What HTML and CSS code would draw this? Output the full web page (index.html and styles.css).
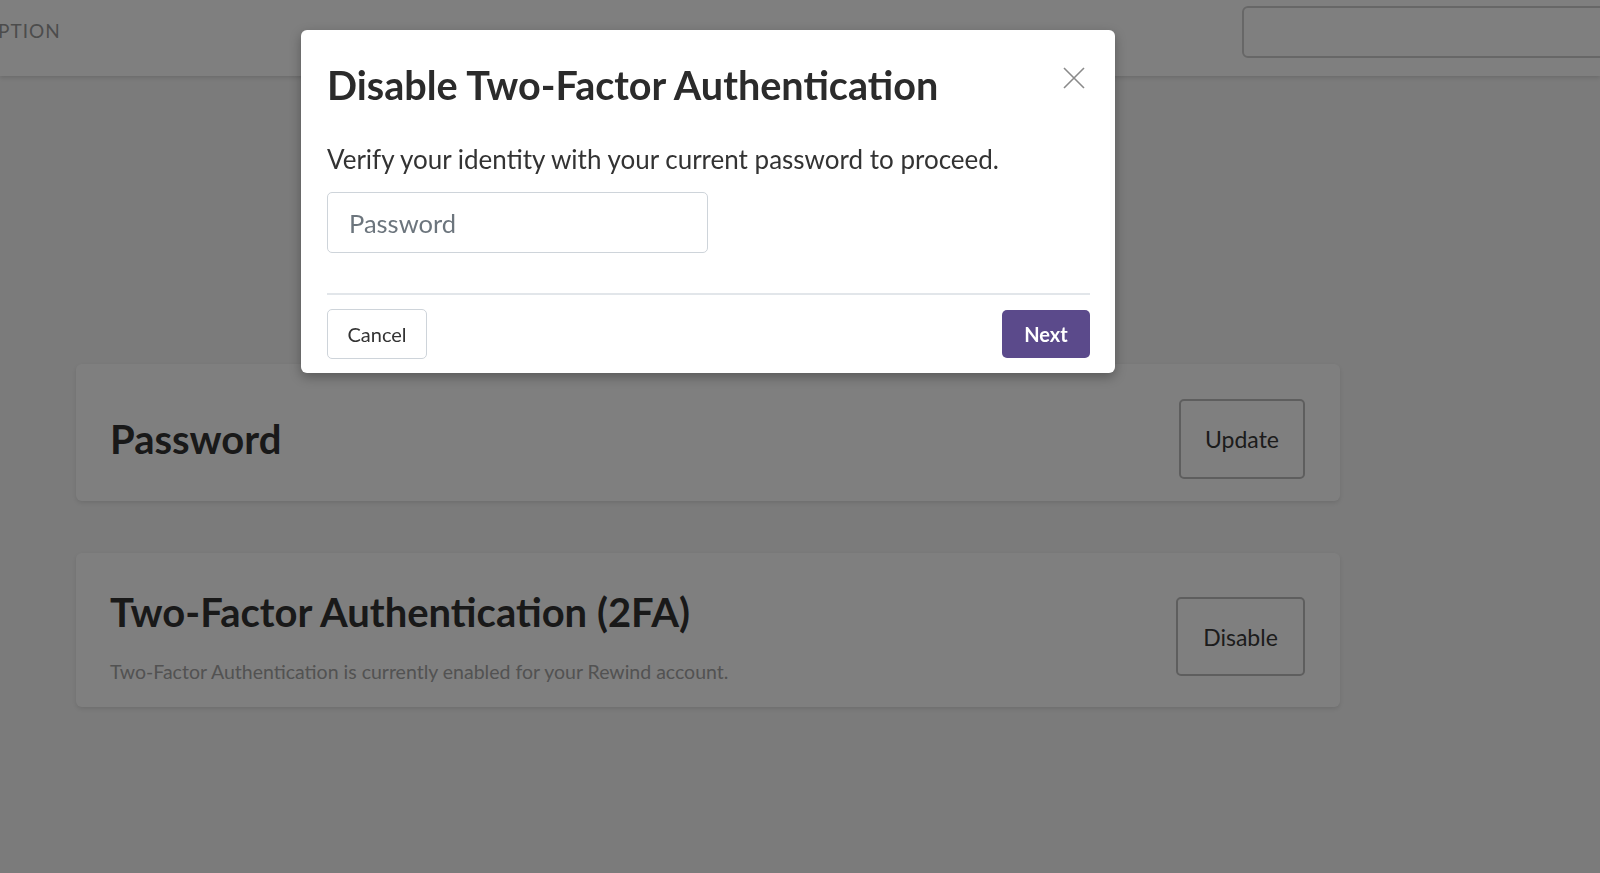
FILE: index.html
```html
<!DOCTYPE html>
<html lang="en">
<head>
    <meta charset="UTF-8">
    <meta name="viewport" content="width=device-width, initial-scale=1.0">
    <title>Security Settings</title>
    <link rel="stylesheet" href="styles.css">
</head>
<body>
    <header class="top-bar">
        <nav class="nav">
            <a class="nav-link">PTION</a>
        </nav>
        <div class="search-box"></div>
    </header>

    <main class="settings">
        <section class="card">
            <div class="card-text">
                <h2 class="card-title">Password</h2>
            </div>
            <button class="outline-btn">Update</button>
        </section>

        <section class="card card-2fa">
            <div class="card-text">
                <h2 class="card-title">Two-Factor Authentication (2FA)</h2>
                <p class="card-desc">Two-Factor Authentication is currently enabled for your Rewind account.</p>
            </div>
            <button class="outline-btn">Disable</button>
        </section>
    </main>

    <div class="backdrop"></div>

    <div class="modal">
        <button class="modal-close" aria-label="Close">
            <svg width="22" height="22" viewBox="0 0 22 22">
                <path d="M1 1 L21 21 M21 1 L1 21" stroke="#8a8a8a" stroke-width="1.6" fill="none"/>
            </svg>
        </button>
        <h1 class="modal-title">Disable Two-Factor Authentication</h1>
        <p class="modal-text">Verify your identity with your current password to proceed.</p>
        <input class="modal-input" type="password" placeholder="Password">
        <div class="modal-footer">
            <button class="btn-cancel">Cancel</button>
            <button class="btn-next">Next</button>
        </div>
    </div>
</body>
</html>
```

FILE: styles.css
```css
body {
    margin: 0;
    font-family: 'Lato', 'Open Sans', sans-serif;
    background-color: #f6f6f6;
    color: #333;
    height: 100vh;
    overflow: hidden;
}
.top-bar {
    height: 76px;
    background-color: #fff;
    display: flex;
    justify-content: space-between;
    align-items: flex-start;
    box-shadow: 0 2px 4px rgba(0, 0, 0, 0.12);
}
.nav {
    display: flex;
    height: 100%;
    align-items: center;
    padding-bottom: 15px;
    box-sizing: border-box;
}
.nav-link {
    font-size: 19px;
    letter-spacing: 1px;
    margin-left: -2px;
    color: #999;
}
.search-box {
    width: 400px;
    height: 48px;
    margin-top: 6px;
    margin-right: -46px;
    border: 2px solid #cfcfcf;
    border-radius: 6px;
}
.settings {
    width: 1264px;
    margin-left: 76px;
    padding-top: 288px;
}
.card {
    display: flex;
    justify-content: space-between;
    align-items: center;
    background-color: #fff;
    border-radius: 6px;
    box-shadow: 0 2px 4px rgba(0, 0, 0, 0.1);
    padding: 35px 35px 22px 34px;
    margin-bottom: 52px;
}
.card-title {
    font-size: 40px;
    font-weight: bold;
    line-height: 1.2;
    margin: 0;
    color: #333;
}
.card-desc {
    font-size: 19.5px;
    line-height: 27px;
    margin: 22px 0 0;
    color: #a4a4a4;
}
.outline-btn {
    font-family: inherit;
    font-size: 23px;
    color: #383838;
    background: transparent;
    border: 2px solid #bdbdbd;
    border-radius: 5px;
    width: 126px;
    height: 80px;
    cursor: pointer;
}
.card-2fa .outline-btn {
    width: 129px;
    height: 79px;
}
.backdrop {
    position: fixed;
    inset: 0;
    background-color: rgba(0, 0, 0, 0.5);
}
.modal {
    position: absolute;
    left: 301px;
    top: 30px;
    width: 814px;
    box-sizing: border-box;
    padding: 31px 25px 14px 26px;
    background-color: #fff;
    border-radius: 6px;
    box-shadow: 0 4px 12px rgba(0, 0, 0, 0.3);
}
.modal-close {
    position: absolute;
    top: 37px;
    right: 30px;
    padding: 0;
    border: none;
    background: none;
    line-height: 0;
    cursor: pointer;
}
.modal-title {
    font-size: 39.6px;
    font-weight: bold;
    line-height: 48px;
    margin: 0;
    color: #2b2b2b;
}
.modal-text {
    font-size: 26px;
    line-height: 39px;
    margin: 31px 0 13px;
    color: #333;
}
.modal-input {
    display: block;
    width: 381px;
    height: 61px;
    box-sizing: border-box;
    padding: 0 21px;
    font-family: inherit;
    font-size: 25.5px;
    border: 1px solid #ced4da;
    border-radius: 5px;
    color: #333;
}
.modal-input::placeholder {
    color: #6c757d;
}
.modal-footer {
    display: flex;
    justify-content: space-between;
    align-items: center;
    margin-top: 40px;
    padding-top: 14px;
    border-top: 2px solid #e2e6ea;
}
.btn-cancel {
    font-family: inherit;
    font-size: 20px;
    color: #333;
    background: #fff;
    border: 1px solid #ced4da;
    border-radius: 5px;
    width: 100px;
    height: 50px;
    cursor: pointer;
}
.btn-next {
    font-family: inherit;
    font-size: 20px;
    font-weight: bold;
    color: #fff;
    background-color: #5b4a8b;
    border: none;
    border-radius: 5px;
    width: 88px;
    height: 48px;
    cursor: pointer;
}
```
